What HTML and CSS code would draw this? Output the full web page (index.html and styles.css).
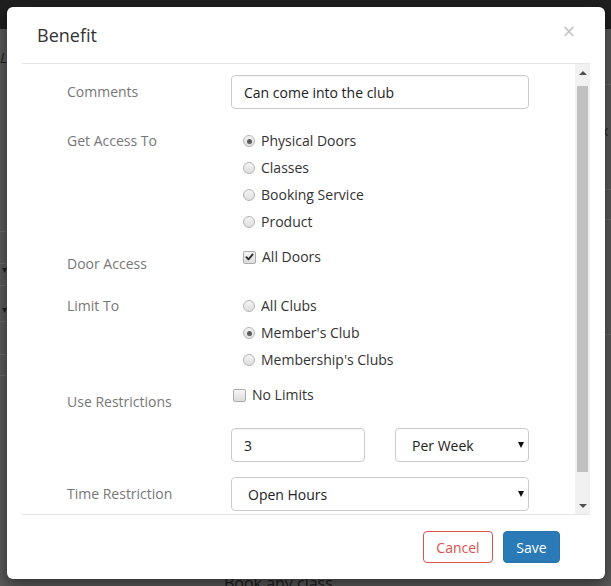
FILE: index.html
```html
<!DOCTYPE html>
<html>
<head>
<meta charset="utf-8">
<link rel="stylesheet" href="styles.css">
</head>
<body>
<div class="page">
  <div class="topnav"></div>
  <div class="page-main">
    <span class="bg-l">L</span>
    <span class="bg-fix">Fix</span>
    <div class="bg-line l1"></div>
    <div class="bg-line l2"></div>
    <div class="bg-line l3"></div>
    <div class="bg-line l4"></div>
    <div class="bg-line l5"></div>
    <div class="bg-line l6"></div>
    <span class="bg-caret c1">&#9662;</span>
    <span class="bg-caret c2">&#9662;</span>
    <div class="bg-line r1"></div>
    <div class="bg-line r2"></div>
    <div class="bg-line r3"></div>
    <div class="bg-line r4"></div>
    <span class="bg-book">Book any class</span>
  </div>
</div>

<div class="modal">
  <div class="modal-header">
    <h4 class="modal-title">Benefit</h4>
    <span class="close">&times;</span>
  </div>
  <div class="modal-body">
    <div class="scroll-content">
      <form class="form">
        <div class="row">
          <label class="lbl pt7">Comments</label>
          <div class="ctl"><input class="form-control" type="text" value="Can come into the club"></div>
        </div>

        <div class="row mt22">
          <label class="lbl">Get Access To</label>
          <div class="ctl">
            <div class="opt"><span class="radio checked"></span><span>Physical Doors</span></div>
            <div class="opt"><span class="radio"></span><span>Classes</span></div>
            <div class="opt"><span class="radio"></span><span>Booking Service</span></div>
            <div class="opt"><span class="radio"></span><span>Product</span></div>
          </div>
        </div>

        <div class="row mt15">
          <label class="lbl pt7">Door Access</label>
          <div class="ctl">
            <div class="opt"><span class="check checked"><svg viewBox="0 0 12 12" width="12" height="12"><path d="M2.6 6.2 L4.9 8.6 L9.4 3.2" fill="none" stroke="#2a2a2a" stroke-width="2" stroke-linecap="round" stroke-linejoin="round"/></svg></span><span>All Doors</span></div>
          </div>
        </div>

        <div class="row mt22">
          <label class="lbl">Limit To</label>
          <div class="ctl">
            <div class="opt"><span class="radio"></span><span>All Clubs</span></div>
            <div class="opt"><span class="radio checked"></span><span>Member's Club</span></div>
            <div class="opt"><span class="radio"></span><span>Membership's Clubs</span></div>
          </div>
        </div>

        <div class="row mt15">
          <label class="lbl pt7">Use Restrictions</label>
          <div class="ctl">
            <div class="opt opt-tight"><span class="check"></span><span>No Limits</span></div>
          </div>
        </div>

        <div class="row mt16">
          <label class="lbl"></label>
          <div class="ctl ctl-split">
            <input class="form-control small" type="text" value="3">
            <div class="select-wrap small">
              <select class="form-select"><option>Per Week</option></select>
              <span class="sel-arrow"></span>
            </div>
          </div>
        </div>

        <div class="row mt15">
          <label class="lbl pt7">Time Restriction</label>
          <div class="ctl">
            <div class="select-wrap">
              <select class="form-select"><option>Open Hours</option></select>
              <span class="sel-arrow"></span>
            </div>
          </div>
        </div>
      </form>
    </div>
    <div class="scrollbar">
      <div class="sb-btn"><span class="tri-up"></span></div>
      <div class="sb-track"><div class="sb-thumb"></div></div>
      <div class="sb-btn"><span class="tri-down"></span></div>
    </div>
  </div>
  <div class="modal-footer">
    <button class="btn btn-cancel" type="button">Cancel</button>
    <button class="btn btn-save" type="button">Save</button>
  </div>
</div>
</body>
</html>
```

FILE: styles.css
```css
* { box-sizing: border-box; }

html, body {
  margin: 0;
  padding: 0;
  width: 611px;
  height: 586px;
  overflow: hidden;
  font-family: "Open Sans", "DejaVu Sans", sans-serif;
  font-size: 14px;
  color: #333;
}

/* backdrop page (already dimmed) */
.page {
  width: 611px;
  height: 586px;
  background: #5a5a5a;
  display: flex;
  flex-direction: column;
}
.topnav {
  height: 29px;
  background: #1f1f1f;
  flex: none;
}
.page-main {
  flex: 1;
  position: relative;
}
.bg-l {
  position: absolute;
  left: 0;
  top: 18px;
  font-style: italic;
  font-size: 15px;
  color: #1e1e1e;
}
.bg-fix {
  position: absolute;
  left: 590px;
  top: 92px;
  font-size: 14px;
  color: #1e1e1e;
}
.bg-line {
  position: absolute;
  height: 1px;
  background: #6a6a6a;
}
.l1 { left: 0; width: 10px; top: 202px; }
.l2 { left: 0; width: 10px; top: 234px; }
.l3 { left: 0; width: 10px; top: 256px; }
.l4 { left: 0; width: 10px; top: 292px; }
.l5 { left: 0; width: 10px; top: 325px; }
.l6 { left: 0; width: 10px; top: 346px; }
.r1 { left: 600px; width: 11px; top: 55px; }
.r2 { left: 600px; width: 11px; top: 160px; }
.r3 { left: 600px; width: 11px; top: 190px; }
.r4 { left: 600px; width: 11px; top: 305px; }
.bg-caret {
  position: absolute;
  left: 2px;
  font-size: 10px;
  color: #1e1e1e;
}
.c1 { top: 233px; }
.c2 { top: 273px; }
.bg-book {
  position: absolute;
  left: 224px;
  top: 543px;
  font-size: 16px;
  color: #1c1c1c;
}

/* modal */
.modal {
  position: absolute;
  left: 7px;
  top: 7px;
  width: 598px;
  height: 572px;
  background: #fff;
  border-radius: 6px;
  box-shadow: 0 5px 15px rgba(0, 0, 0, 0.5);
  display: flex;
  flex-direction: column;
}

.modal-header {
  height: 56px;
  padding: 15px 30px;
  display: flex;
  justify-content: space-between;
  align-items: flex-start;
  flex: none;
}
.modal-title {
  margin: 0;
  font-size: 18px;
  font-weight: 400;
  line-height: 26px;
  color: #333;
}
.close {
  font-size: 17px;
  font-weight: 400;
  line-height: 1;
  color: #c4c4c4;
  margin-top: 1px;
  margin-right: -1px;
  font-family: "DejaVu Sans", "Open Sans", sans-serif;
}

.modal-body {
  margin: 0 15px;
  height: 452px;
  border-top: 1px solid #e5e5e5;
  border-bottom: 1px solid #e5e5e5;
  display: flex;
  flex: none;
}
.scroll-content {
  width: 553px;
  height: 450px;
  overflow: hidden;
}

/* fake classic scrollbar */
.scrollbar {
  width: 15px;
  height: 450px;
  background: #f1f1f1;
  display: flex;
  flex-direction: column;
}
.sb-btn {
  height: 17px;
  display: flex;
  align-items: center;
  justify-content: center;
  flex: none;
}
.tri-up {
  width: 0;
  height: 0;
  border-left: 4px solid transparent;
  border-right: 4px solid transparent;
  border-bottom: 4px solid #505050;
}
.tri-down {
  width: 0;
  height: 0;
  border-left: 4px solid transparent;
  border-right: 4px solid transparent;
  border-top: 4px solid #505050;
}
.sb-track {
  flex: 1;
  padding: 5px 2px 0 2px;
}
.sb-thumb {
  height: 386px;
  background: #c1c1c1;
}

/* form */
.form {
  margin: 0;
  padding: 11px 0 38px 45px;
}
.row {
  display: flex;
}
.mt15 { margin-top: 15px; }
.mt16 { margin-top: 16px; }
.mt22 { margin-top: 22px; }

.lbl {
  width: 164px;
  flex: none;
  color: #777;
  line-height: 20px;
}
.pt7 { padding-top: 7px; }

.ctl {
  width: 298px;
  flex: none;
}
.ctl-split {
  display: flex;
  gap: 30px;
}

.form-control {
  display: block;
  width: 100%;
  height: 34px;
  padding: 0 12px;
  border: 1px solid #ccc;
  border-radius: 4px;
  font-family: "Open Sans", "DejaVu Sans", sans-serif;
  font-size: 14px;
  color: #222;
  background: #fff;
  box-shadow: inset 0 1px 1px rgba(0, 0, 0, 0.04);
  outline: none;
}
.form-control.small { width: 134px; }

.select-wrap {
  position: relative;
  width: 100%;
}
.select-wrap.small { width: 134px; }
.form-select {
  -webkit-appearance: none;
  appearance: none;
  display: block;
  width: 100%;
  height: 34px;
  padding: 0 16px;
  border: 1px solid #ccc;
  border-radius: 4px;
  background: #fff;
  font-family: "Open Sans", "DejaVu Sans", sans-serif;
  font-size: 14px;
  color: #222;
  outline: none;
}
.sel-arrow {
  position: absolute;
  right: 5px;
  top: 14px;
  width: 0;
  height: 0;
  border-left: 3.5px solid transparent;
  border-right: 3.5px solid transparent;
  border-top: 6px solid #111;
}

.opt {
  display: flex;
  align-items: center;
  height: 20px;
  line-height: 20px;
  padding-left: 12px;
  gap: 6px;
  color: #333;
  margin-bottom: 7px;
}
.opt:last-child { margin-bottom: 0; }
.opt-tight { padding-left: 2px; }

.radio {
  width: 12px;
  height: 12px;
  border-radius: 50%;
  border: 1px solid #b4b4b4;
  background: linear-gradient(#f4f4f4, #dedede);
  display: flex;
  align-items: center;
  justify-content: center;
  flex: none;
}
.radio.checked::after {
  content: "";
  width: 5px;
  height: 5px;
  border-radius: 50%;
  background: #5a5a5a;
}

.check {
  width: 13px;
  height: 13px;
  border-radius: 2px;
  border: 1px solid #ababab;
  background: linear-gradient(#f6f6f6, #dcdcdc);
  display: flex;
  align-items: center;
  justify-content: center;
  flex: none;
}
.check svg { display: block; }

/* footer */
.modal-footer {
  height: 64px;
  padding: 16px 30px;
  margin: 0 15px;
  display: flex;
  justify-content: flex-end;
  gap: 10px;
  flex: none;
}
.btn {
  height: 32px;
  border-radius: 4px;
  font-family: "Open Sans", "DejaVu Sans", sans-serif;
  font-size: 14px;
  padding: 0;
  cursor: pointer;
}
.btn-cancel {
  width: 70px;
  background: #fff;
  border: 1px solid #d9534f;
  color: #d9534f;
}
.btn-save {
  width: 57px;
  background: #2a7ab8;
  border: 1px solid #2a72ad;
  color: #fff;
}
```
